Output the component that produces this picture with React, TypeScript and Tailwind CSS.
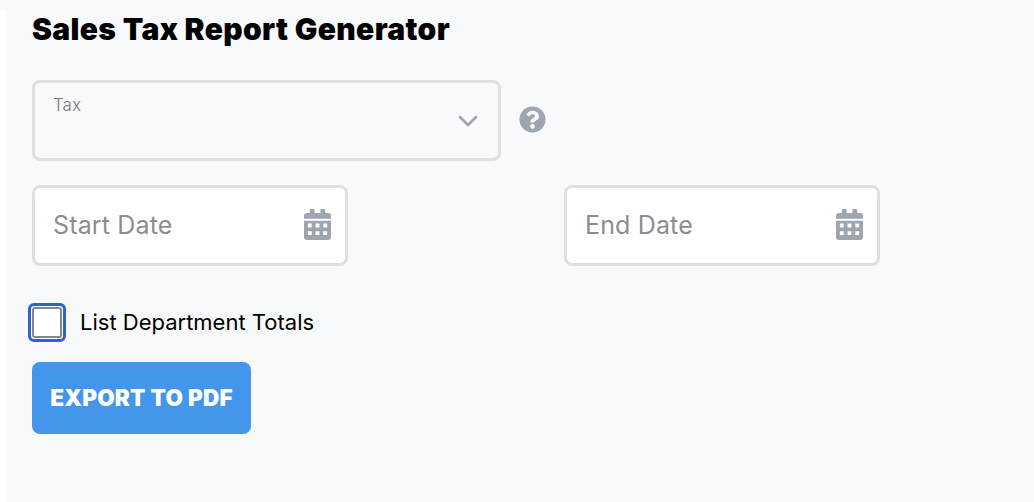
import { ChevronDown } from "lucide-react";

function CalendarIcon() {
  return (
    <svg viewBox="0 0 28 32" className="w-[27px] h-[31px] -mt-[3px] text-[#9fa4b1]" fill="currentColor">
      <path d="M7 0h3a1 1 0 0 1 1 1v3h6V1a1 1 0 0 1 1-1h3a1 1 0 0 1 1 1v3h3a3 3 0 0 1 3 3v3H0V7a3 3 0 0 1 3-3h3V1a1 1 0 0 1 1-1z" />
      <path
        fillRule="evenodd"
        d="M0 12h28v17a3 3 0 0 1-3 3H3a3 3 0 0 1-3-3V12zm4 3v4h4v-4H4zm8 0v4h4v-4h-4zm8 0v4h4v-4h-4zM4 23v4h4v-4H4zm8 0v4h4v-4h-4zm8 0v4h4v-4h-4z"
      />
    </svg>
  );
}

function QuestionIcon() {
  return (
    <svg viewBox="0 0 512 512" className="w-[27px] h-[27px] -mt-[3px] text-[#9fa4b1]" fill="currentColor">
      <path d="M504 256c0 137-111 248-248 248S8 393 8 256C8 119 119 8 256 8s248 111 248 248zM262.7 90c-54.500 0-89.300 23-116.500 63.800-3.500 5.300-2.400 12.400 2.700 16.300l34.700 26.300c5.200 3.900 12.600 3 16.700-2.100 17.900-22.700 30.100-35.800 57.300-35.800 20.400 0 45.700 13.100 45.700 32.900 0 15-12.400 22.700-32.500 34-23.500 13.200-54.600 29.600-54.600 70.600V302c0 6.600 5.400 12 12 12h56c6.600 0 12-5.400 12-12v-1.300c0-28.400 83-29.600 83-106.700 0-58-60.200-102-116.500-102zM256 338c-25.400 0-46 20.600-46 46 0 25.400 20.600 46 46 46s46-20.600 46-46c0-25.400-20.600-46-46-46z" />
    </svg>
  );
}

function DateField({ label }: { label: string }) {
  return (
    <div className="w-[316px] h-[81px] bg-white border-[3px] border-[#dddfe1] rounded-lg flex items-center justify-between pl-[18px] pr-[14px]">
      <span className="pt-[1px] text-[25px] text-[#8b8d92] tracking-[0.15px]">{label}</span>
      <CalendarIcon />
    </div>
  );
}

export default function App() {
  return (
    <div className="h-[502px] bg-[#f8f9fb] flex overflow-hidden font-['Inter','Liberation_Sans',sans-serif]">
      {/* edge of the sidebar */}
      <div className="w-[7px] mt-[9px] bg-white rounded-tr-md" />
      <div className="flex-1 pt-2 pl-[25px] flex flex-col items-start">
        <h1 className="mt-[3px] text-[30px] leading-9 font-black text-black tracking-[0.35px]">
          Sales Tax Report Generator
        </h1>

        {/* tax select */}
        <div className="mt-[33px] flex items-center gap-[18px]">
          <div className="relative w-[469px] h-[81px] border-[3px] border-[#dddfe1] rounded-lg pl-[18px] pt-[12px]">
            <span className="block text-[17px] leading-5 font-light text-[#77797e]">Tax</span>
            <ChevronDown className="absolute right-[14px] top-[22px] w-[32px] h-[32px] text-[#9fa4b1]" strokeWidth={2} />
          </div>
          <QuestionIcon />
        </div>

        {/* date range */}
        <div className="mt-6 flex gap-[216px]">
          <DateField label="Start Date" />
          <DateField label="End Date" />
        </div>

        <div className="mt-[37px] -ml-[4px] flex items-center gap-[14px]">
          <div className="w-[38px] h-[39px] border-[3px] border-[#2c63d0] rounded-[6px] bg-white flex items-center justify-center">
            <div className="w-[30px] h-[31px] border-2 border-[#85878a] rounded-[3px]" />
          </div>
          <span className="text-[22px] text-black">List Department Totals</span>
        </div>

        <button className="mt-5 w-[219px] h-[72px] bg-[#4495ec] rounded-lg text-white text-[22.5px] font-black tracking-[0.25px]">
          EXPORT TO PDF
        </button>
      </div>
    </div>
  );
}
